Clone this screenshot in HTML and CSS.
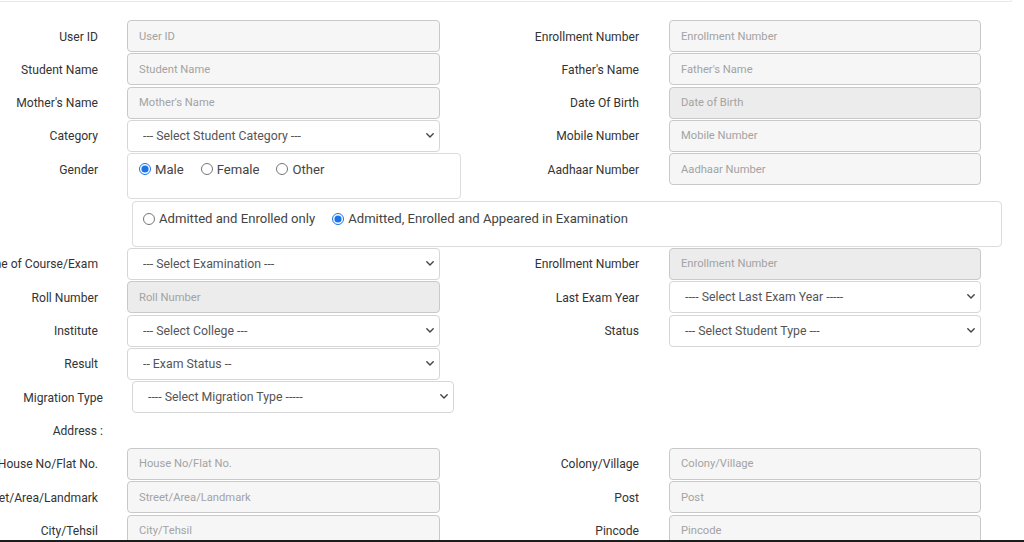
FILE: index.html
```html
<!DOCTYPE html>
<html lang="en">
<head>
<meta charset="utf-8">
<title>Student Registration</title>
<link rel="stylesheet" href="styles.css">
</head>
<body>
<div class="topbar"></div>
<form class="form">
  <div class="row">
    <div class="field"><span class="lbl">User ID</span><input class="inp" placeholder="User ID"></div>
    <div class="field right"><span class="lbl">Enrollment Number</span><input class="inp" placeholder="Enrollment Number"></div>
  </div>
  <div class="row">
    <div class="field"><span class="lbl">Student Name</span><input class="inp" placeholder="Student Name"></div>
    <div class="field right"><span class="lbl">Father's Name</span><input class="inp" placeholder="Father's Name"></div>
  </div>
  <div class="row">
    <div class="field"><span class="lbl">Mother's Name</span><input class="inp" placeholder="Mother's Name"></div>
    <div class="field right"><span class="lbl">Date Of Birth</span><input class="inp disabled" placeholder="Date of Birth" disabled></div>
  </div>
  <div class="row">
    <div class="field"><span class="lbl">Category</span><span class="selwrap"><select class="sel"><option>--- Select Student Category ---</option></select><svg class="chev" viewBox="0 0 8 5"><path d="M0.8 0.8 L4 4 L7.2 0.8"/></svg></span></div>
    <div class="field right"><span class="lbl">Mobile Number</span><input class="inp" placeholder="Mobile Number"></div>
  </div>
  <div class="row tall">
    <div class="field"><span class="lbl">Gender</span>
      <div class="radiobox gender">
        <label class="opt"><input type="radio" name="g" checked>Male</label>
        <label class="opt"><input type="radio" name="g">Female</label>
        <label class="opt"><input type="radio" name="g">Other</label>
      </div>
    </div>
    <div class="field right"><span class="lbl">Aadhaar Number</span><input class="inp" placeholder="Aadhaar Number"></div>
  </div>
  <div class="row tall">
    <div class="radiobox admission">
      <label class="opt"><input type="radio" name="a">Admitted and Enrolled only</label>
      <label class="opt"><input type="radio" name="a" checked>Admitted, Enrolled and Appeared in Examination</label>
    </div>
  </div>
  <div class="row">
    <div class="field"><span class="lbl">Name of Course/Exam</span><span class="selwrap"><select class="sel"><option>--- Select Examination ---</option></select><svg class="chev" viewBox="0 0 8 5"><path d="M0.8 0.8 L4 4 L7.2 0.8"/></svg></span></div>
    <div class="field right"><span class="lbl">Enrollment Number</span><input class="inp disabled" placeholder="Enrollment Number" disabled></div>
  </div>
  <div class="row">
    <div class="field"><span class="lbl">Roll Number</span><input class="inp disabled" placeholder="Roll Number" disabled></div>
    <div class="field right"><span class="lbl">Last Exam Year</span><span class="selwrap"><select class="sel"><option>---- Select Last Exam Year -----</option></select><svg class="chev" viewBox="0 0 8 5"><path d="M0.8 0.8 L4 4 L7.2 0.8"/></svg></span></div>
  </div>
  <div class="row">
    <div class="field"><span class="lbl">Institute</span><span class="selwrap"><select class="sel"><option>--- Select College ---</option></select><svg class="chev" viewBox="0 0 8 5"><path d="M0.8 0.8 L4 4 L7.2 0.8"/></svg></span></div>
    <div class="field right"><span class="lbl">Status</span><span class="selwrap"><select class="sel"><option>--- Select Student Type ---</option></select><svg class="chev" viewBox="0 0 8 5"><path d="M0.8 0.8 L4 4 L7.2 0.8"/></svg></span></div>
  </div>
  <div class="row">
    <div class="field"><span class="lbl">Result</span><span class="selwrap"><select class="sel"><option>-- Exam Status --</option></select><svg class="chev" viewBox="0 0 8 5"><path d="M0.8 0.8 L4 4 L7.2 0.8"/></svg></span></div>
  </div>
  <div class="row">
    <div class="field wide"><span class="lbl">Migration Type</span><span class="selwrap"><select class="sel"><option>---- Select Migration Type -----</option></select><svg class="chev" viewBox="0 0 8 5"><path d="M0.8 0.8 L4 4 L7.2 0.8"/></svg></span></div>
  </div>
  <div class="row">
    <div class="field wide"><span class="lbl">Address :</span></div>
  </div>
  <div class="row">
    <div class="field"><span class="lbl">House No/Flat No.</span><input class="inp" placeholder="House No/Flat No."></div>
    <div class="field right"><span class="lbl">Colony/Village</span><input class="inp" placeholder="Colony/Village"></div>
  </div>
  <div class="row">
    <div class="field"><span class="lbl">Street/Area/Landmark</span><input class="inp" placeholder="Street/Area/Landmark"></div>
    <div class="field right"><span class="lbl">Post</span><input class="inp" placeholder="Post"></div>
  </div>
  <div class="row">
    <div class="field"><span class="lbl">City/Tehsil</span><input class="inp" placeholder="City/Tehsil"></div>
    <div class="field right"><span class="lbl">Pincode</span><input class="inp" placeholder="Pincode"></div>
  </div>
</form>
<div class="bottomline"></div>
</body>
</html>
```
FILE: styles.css
```css
html, body {
  margin: 0;
  padding: 0;
  background: #fff;
  overflow: hidden;
  height: 542px;
}
body {
  font-family: Roboto, "Liberation Sans", Arial, sans-serif;
  color: #333;
}
.topbar {
  width: 1011px;
  height: 1px;
  border-bottom: 1px solid #e8e8e8;
  border-right: 1px solid #e8e8e8;
  border-bottom-right-radius: 4px;
}
.form {
  display: flex;
  flex-direction: column;
  row-gap: 1.333px;
  padding-top: 18px;
}
.row {
  display: grid;
  grid-template-columns: 440px 584px;
  height: 32px;
}
.row.tall {
  height: 46px;
}
.field {
  display: flex;
  align-items: flex-start;
  min-width: 0;
}
.lbl {
  flex: none;
  display: flex;
  justify-content: flex-end;
  align-items: center;
  width: 98px;
  height: 32px;
  padding-top: 1px;
  box-sizing: border-box;
  margin-right: 29px;
  white-space: nowrap;
  font-size: 12.1px;
  color: #333;
}
.field.right .lbl {
  width: 199px;
  margin-right: 30px;
}
.field.wide .lbl {
  width: 103px;
}
.inp, .sel {
  box-sizing: border-box;
  flex: none;
  width: 313px;
  height: 32px;
  margin: 0;
  border: 1px solid #c9c9c9;
  border-radius: 4px;
  background: #f6f6f6;
  font-family: Roboto, "Liberation Sans", Arial, sans-serif;
  font-size: 11.2px;
  color: #555;
  padding: 0 11px;
  outline: none;
}
.field.right .inp, .field.right .sel {
  width: 312px;
}
.inp::placeholder {
  color: #a3a3a3;
}
.inp.disabled {
  background: #ececec;
}
.selwrap {
  position: relative;
  display: block;
  flex: none;
}
.sel {
  display: block;
  -webkit-appearance: none;
  appearance: none;
  background: #fff;
  border-color: #d6d6d6;
  font-size: 12.3px;
  color: #555;
  padding: 0 24px 0 15px;
}
.chev {
  position: absolute;
  right: 6px;
  top: 13px;
  width: 8px;
  height: 5px;
  fill: none;
  stroke: #444;
  stroke-width: 1.4;
  stroke-linecap: round;
  stroke-linejoin: round;
  pointer-events: none;
}
.field.wide .sel {
  width: 322px;
}
.radiobox {
  box-sizing: border-box;
  flex: none;
  display: flex;
  align-items: center;
  border: 1px solid #dcdcdc;
  border-radius: 4px;
  background: #fff;
  font-size: 13.1px;
  color: #444;
}
.radiobox.gender {
  width: 334px;
  height: 46px;
  align-items: flex-start;
  padding: 6px 0 0 10px;
  column-gap: 16px;
}
.radiobox.admission {
  grid-column: 1 / 3;
  margin-left: 132px;
  width: 870px;
  height: 46px;
  align-items: flex-start;
  padding: 8px 0 0 9px;
  column-gap: 16px;
}
.opt {
  display: flex;
  align-items: center;
  height: 18px;
  white-space: nowrap;
}
.opt input {
  width: 12px;
  height: 12px;
  margin: 0 4px 0 1px;
  accent-color: #1a73e8;
}
.bottomline {
  position: fixed;
  left: 0;
  right: 0;
  bottom: 0;
  height: 2px;
  background: #1c1c1c;
}
```
